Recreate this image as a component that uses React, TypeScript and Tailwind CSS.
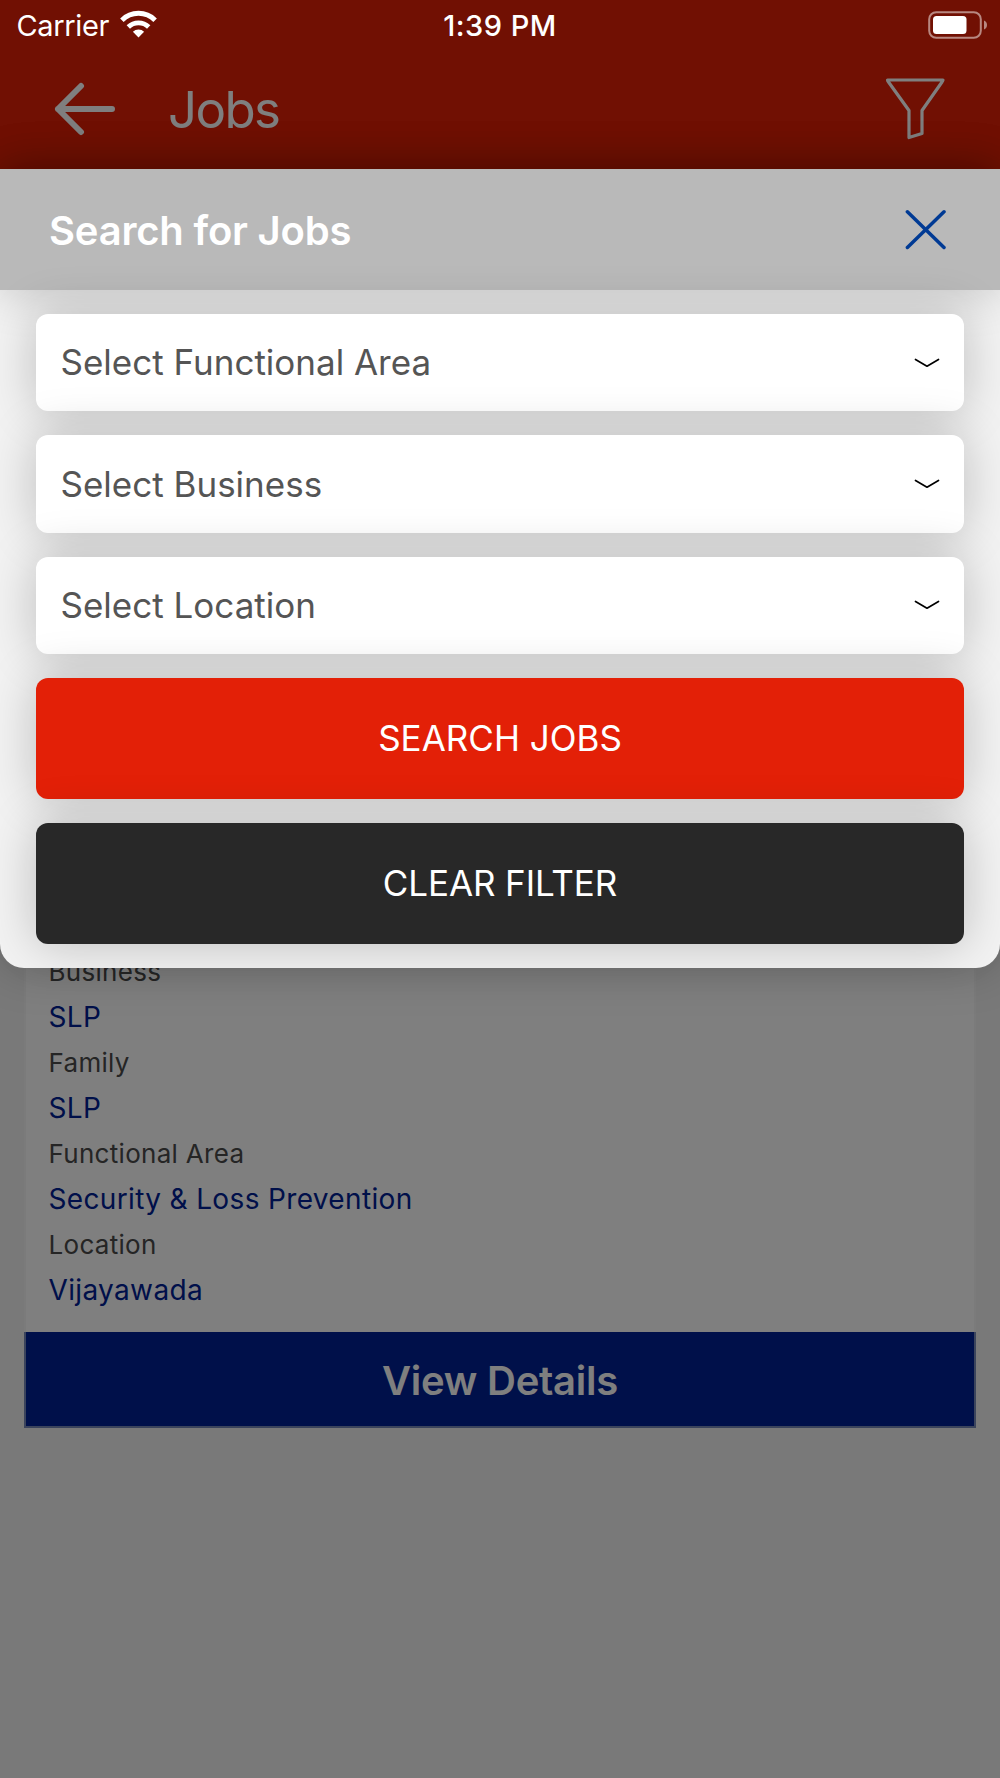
import {useState} from 'react'

interface Detail {
	label: string
	value: string
}

const details: Detail[] = [
	{label: 'Business', value: 'SLP'},
	{label: 'Family', value: 'SLP'},
	{label: 'Functional Area', value: 'Security & Loss Prevention'},
	{label: 'Location', value: 'Vijayawada'},
]

const filters = ['Select Functional Area', 'Select Business', 'Select Location']

const StatusBar = () => (
	<div className="absolute inset-x-0 top-0 z-20 grid h-[50px] grid-cols-3 items-center px-3 text-white">
		<div className="flex items-center gap-[11px] pl-[4.500px]">
			<span className="text-[29px] leading-[52px] tracking-[-0.35px]">Carrier</span>
			<svg width="37" height="28" viewBox="0 0 37 28" fill="none" className="-mt-[5px]">
				<path d="M1.9 10.2a23.6 23.6 0 0 1 33.2 0" stroke="white" strokeWidth="5" />
				<path d="M8.3 17a14.6 14.6 0 0 1 20.4 0" stroke="white" strokeWidth="4.8" />
				<path d="M18.5 27.5l-5.6-5.8a8 8 0 0 1 11.2 0z" fill="white" />
			</svg>
		</div>
		<span className="text-center text-[29px] font-medium leading-[52px] tracking-[0.5px]">1:39 PM</span>
		<svg width="60" height="28" viewBox="0 0 60 28" fill="none" className="-mt-[3px] justify-self-end">
			<rect x="1.2" y="1.2" width="51.6" height="25.6" rx="7" stroke="white" strokeOpacity=".5" strokeWidth="2" />
			<rect x="5" y="5" width="33.5" height="18" rx="3.5" fill="white" />
			<path d="M56 9.5c4 1.500 4 7.500 0 9z" fill="white" fillOpacity=".5" />
		</svg>
	</div>
)

const Header = () => (
	<header className="flex h-[169px] items-center bg-[#e32007] pl-[54px] pr-[55px] pt-[49px] text-white">
		<svg width="62" height="54" viewBox="0 0 62 54" fill="none" stroke="currentColor" strokeWidth="6" strokeLinecap="round" strokeLinejoin="round">
			<path d="M27 4L4 27l23 23M4 27h54" />
		</svg>
		<h1 className="ml-[52px] pt-0.5 text-[51px] leading-[60px] tracking-[-1.6px]">Jobs</h1>
		<svg width="60" height="62" viewBox="0 0 60 62" fill="none" stroke="currentColor" strokeWidth="3.200" strokeLinejoin="round" className="ml-auto">
			<path d="M2.500 2h55.500q-.2 1-1 2L37 32.500v23l-13 4V32.500L3.500 4q-1-1-1-2z" />
		</svg>
	</header>
)

const JobCard = () => (
	<section className="mx-6 bg-white">
		<dl className="border-x-2 border-[#f6f6f6] px-[22.500px] pb-[19px] pt-[780px]">
			{details.map(({label, value}) => (
				<div key={label}>
					<dt className="text-[26px] leading-[45.5px] tracking-[0.3px] text-[#4a4a4a]">{label}</dt>
					<dd className="text-[28px] leading-[45.5px] tracking-[0.35px] text-[#002094]">{value}</dd>
				</div>
			))}
		</dl>
		<button className="block h-24 w-full border-2 border-t-0 border-[#7788b8] bg-[#002094] pt-1 text-[40px] font-semibold tracking-[-0.25px] text-white">
			View Details
		</button>
	</section>
)

const Select = ({text}: {text: string}) => (
	<button className="flex h-[97.33px] w-full items-center justify-between rounded-xl bg-white pl-[24.500px] pr-6 text-left text-[35px] text-[#555] shadow-[0_0_48px_rgba(0,0,0,0.22)]">
		{text}
		<svg width="26" height="10" viewBox="0 0 26 10" fill="none" stroke="black" strokeWidth="1.700" strokeLinecap="round" strokeLinejoin="round">
			<path d="M1.500 1.500L13 8.200l11.500-6.700" />
		</svg>
	</button>
)

const SearchSheet = ({onClose}: {onClose: () => void}) => (
	<div className="absolute inset-0 z-10 bg-black/50 pt-[169px]">
		<section className="rounded-b-3xl bg-[#f2f2f2] shadow-[0_0_48px_rgba(0,0,0,0.22)]">
			<div className="flex h-[121px] items-center justify-between bg-[#b9b9b9] pl-[49px] pr-[54px] shadow-[0_0_48px_rgba(0,0,0,0.22)]">
				<h2 className="pt-0.5 text-[40px] font-semibold tracking-[-0.2px] text-white">Search for Jobs</h2>
				<button onClick={onClose}>
					<svg width="42" height="42" viewBox="0 0 42 42" fill="none" stroke="#003a94" strokeWidth="3.5" strokeLinecap="round">
						<path d="M3.400 2.800L40 38.500M40 2.800L3.400 38.500" />
					</svg>
				</button>
			</div>
			<div className="flex flex-col gap-6 px-9 py-6">
				{filters.map((text) => (
					<Select key={text} text={text} />
				))}
				<button className="h-[121px] rounded-xl bg-[#e32007] text-[35px] text-white shadow-[0_0_48px_rgba(0,0,0,0.22)]">SEARCH JOBS</button>
				<button className="h-[121px] rounded-xl bg-[#282828] text-[35px] tracking-[-0.1px] text-white shadow-[0_0_48px_rgba(0,0,0,0.22)]">
					CLEAR FILTER
				</button>
			</div>
		</section>
	</div>
)

const App = () => {
	const [open, setOpen] = useState(true)

	return (
		<main className="relative h-[1778px] w-[1000px] overflow-hidden bg-[#f2f2f2] font-[Inter,'Liberation_Sans',sans-serif]">
			<StatusBar />
			<Header />
			<JobCard />
			{open && <SearchSheet onClose={() => setOpen(false)} />}
		</main>
	)
}
export default App
